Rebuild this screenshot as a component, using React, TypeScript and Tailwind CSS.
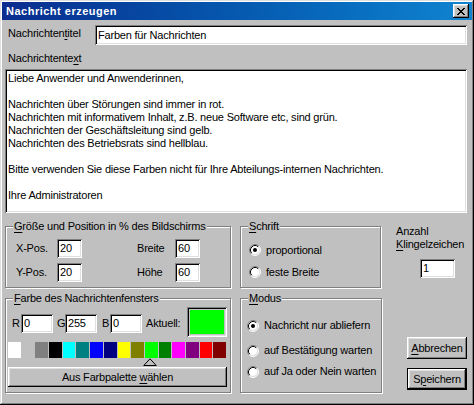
import React from 'react';

const sunken =
  'shadow-[inset_1px_1px_#808080,inset_-1px_-1px_#fff,inset_2px_2px_#000,inset_-2px_-2px_#dfdfdf]';
const raised =
  'shadow-[inset_-1px_-1px_#000,inset_1px_1px_#fff,inset_-2px_-2px_#808080,inset_2px_2px_#dfdfdf]';

const U: React.FC<{ children: React.ReactNode }> = ({ children }) => (
  <span className="underline underline-offset-[2px]">{children}</span>
);

const Field: React.FC<{ value: string; className: string }> = ({ value, className }) => (
  <div className={`bg-white pl-[3px] flex items-center shrink-0 ${sunken} ${className}`}>{value}</div>
);

const Radio: React.FC<{ checked?: boolean }> = ({ checked }) => (
  <svg width="12" height="12" viewBox="0 0 12 12" className="shrink-0">
    <circle cx="6" cy="6" r="5" fill="#fff" />
    <path d="M2.11 9.89A5.5 5.5 0 0 1 9.89 2.11" fill="none" stroke="#808080" />
    <path d="M9.89 2.11A5.5 5.5 0 0 1 2.11 9.89" fill="none" stroke="#fff" />
    <path d="M2.82 9.18A4.5 4.5 0 0 1 9.18 2.82" fill="none" stroke="#000" />
    <path d="M9.18 2.82A4.5 4.5 0 0 1 2.82 9.18" fill="none" stroke="#dfdfdf" />
    {checked && <circle cx="6" cy="6" r="2" fill="#000" />}
  </svg>
);

const Group: React.FC<{ legend: React.ReactNode; className: string; children: React.ReactNode }> = ({
  legend,
  className,
  children,
}) => (
  <div className={`relative shrink-0 border border-[#808080] shadow-[inset_1px_1px_#fff,1px_1px_#fff] ${className}`}>
    <span className="absolute left-[7px] -top-[7px] bg-[#c0c0c0] px-[1px] whitespace-nowrap">{legend}</span>
    {children}
  </div>
);

const Btn: React.FC<{ children: React.ReactNode; className: string }> = ({ children, className }) => (
  <div className={`bg-[#c0c0c0] flex items-center justify-center shrink-0 ${raised} ${className}`}>{children}</div>
);

const swatches = [
  '#ffffff', '#c0c0c0', '#808080', '#000000', '#00ffff', '#008080', '#0000ff', '#000080',
  '#ffff00', '#808000', '#00ff00', '#008000', '#ff00ff', '#800080', '#ff0000', '#800000',
];

const messageText = `Liebe Anwender und Anwenderinnen,

Nachrichten über Störungen sind immer in rot.
Nachrichten mit informativem Inhalt, z.B. neue Software etc, sind grün.
Nachrichten der Geschäftsleitung sind gelb.
Nachrichten des Betriebsrats sind hellblau.

Bitte verwenden Sie diese Farben nicht für Ihre Abteilungs-internen Nachrichten.

Ihre Administratoren`;

export default function App() {
  return (
    <div className="w-[474px] h-[405px] bg-[#c0c0c0] p-[2px] shadow-[inset_-1px_-1px_#000,inset_1px_1px_#dfdfdf,inset_-2px_-2px_#808080,inset_2px_2px_#fff] font-['Liberation_Sans',Arial,sans-serif] text-[11px] leading-[13px] tracking-[-0.2px] text-black">
      {/* title bar */}
      <div className="h-[18px] flex items-center justify-between pl-[4px] pr-[3px] bg-linear-to-r from-[#0a2c8e] to-[#1084d0]">
        <span className="font-bold text-white tracking-[0.5px]">Nachricht erzeugen</span>
        <div className={`w-[16px] h-[14px] bg-[#c0c0c0] flex items-center justify-center ${raised}`}>
          <svg width="8" height="7" viewBox="0 0 8 7" shapeRendering="crispEdges">
            <path
              fill="#000"
              d="M0 0h2v1H0zM6 0h2v1H6zM1 1h2v1H1zM5 1h2v1H5zM2 2h4v1H2zM3 3h2v1H3zM2 4h4v1H2zM1 5h2v1H1zM5 5h2v1H5zM0 6h2v1H0zM6 6h2v1H6z"
            />
          </svg>
        </div>
      </div>

      <div className="pl-[3px]">
        <div className="mt-[5px] flex items-start">
          <div className="w-[90px] pl-[3px] mt-[2px]">
            Nachrichten<U>t</U>itel
          </div>
          <Field value="Farben für Nachrichten" className="w-[372px] h-[20px]" />
        </div>

        <div className="mt-[7px] pl-[3px]">
          Nachrichtente<U>x</U>t
        </div>
        <div className={`mt-[4px] w-[462px] h-[144px] bg-white pt-[3px] pl-[3px] whitespace-pre overflow-hidden ${sunken}`}>
          {messageText}
        </div>

        {/* size / font / rings */}
        <div className="mt-[13px] flex items-start">
          <Group
            legend={
              <>
                <U>G</U>röße und Position in % des Bildschirms
              </>
            }
            className="w-[226px] h-[62px]"
          >
            <div className="pt-[12px] pl-[10px] flex flex-col gap-[5px]">
              <div className="flex items-center h-[19px]">
                <span className="w-[41px]">X-Pos.</span>
                <Field value="20" className="w-[25px] h-[19px]" />
                <span className="ml-[55px] w-[38px]">Breite</span>
                <Field value="60" className="w-[25px] h-[19px]" />
              </div>
              <div className="flex items-center h-[19px]">
                <span className="w-[41px]">Y-Pos.</span>
                <Field value="20" className="w-[25px] h-[19px]" />
                <span className="ml-[55px] w-[38px]">Höhe</span>
                <Field value="60" className="w-[25px] h-[19px]" />
              </div>
            </div>
          </Group>

          <Group
            legend={
              <>
                <U>S</U>chrift
              </>
            }
            className="ml-[9px] w-[141px] h-[62px]"
          >
            <div className="pt-[17px] pl-[8px] flex flex-col gap-[10px]">
              <div className="flex items-center gap-[5px] h-[12px]">
                <Radio checked />
                <span>proportional</span>
              </div>
              <div className="flex items-center gap-[5px] h-[12px]">
                <Radio />
                <span>feste Breite</span>
              </div>
            </div>
          </Group>

          <div className="ml-[15px] -mt-px flex flex-col">
            <span>Anzahl</span>
            <span>
              <U>K</U>lingelzeichen
            </span>
            <Field value="1" className="ml-[24px] mt-[8px] w-[35px] h-[19px]" />
          </div>
        </div>

        {/* colour / mode / buttons */}
        <div className="mt-[10px] flex items-start">
          <Group
            legend={
              <>
                <U>F</U>arbe des Nachrichtenfensters
              </>
            }
            className="w-[226px] h-[95px]"
          >
            <div className="pt-[8px] pl-[6px] flex items-start h-[38px]">
              <div className="mt-[7px] flex items-center h-[19px]">
                <span className="w-[9px]">R</span>
                <Field value="0" className="w-[32px] h-[19px]" />
                <span className="ml-[4px] w-[8px]">G</span>
                <Field value="255" className="w-[32px] h-[19px]" />
                <span className="ml-[5px] w-[8px]">B</span>
                <Field value="0" className="w-[32px] h-[19px]" />
                <span className="ml-[4px] w-[41px]">Aktuell:</span>
              </div>
              <div className={`w-[40px] h-[30px] p-[3px] bg-[#c0c0c0] ${sunken}`}>
                <div className="w-full h-full bg-[#00ff00]" />
              </div>
            </div>
            <div className="mt-[5px] ml-[2px] w-[218px] h-[16px] flex gap-px">
              {swatches.map((c) => (
                <div key={c} className="flex-1 h-full" style={{ backgroundColor: c }} />
              ))}
            </div>
            <div className="ml-[137px] h-[8px]">
              <svg width="14" height="8" viewBox="0 0 14 8">
                <path d="M7 0.8L0.8 7.5H13.2Z" fill="none" stroke="#000" />
              </svg>
            </div>
            <Btn className="mt-[1px] ml-[2px] w-[219px] h-[20px]">
              <span>
                Aus Farbpalette <U>w</U>ählen
              </span>
            </Btn>
          </Group>

          <Group
            legend={
              <>
                <U>M</U>odus
              </>
            }
            className="ml-[9px] w-[142px] h-[95px]"
          >
            <div className="pt-[20px] pl-[6px] flex flex-col">
              <div className="flex items-center gap-[5px] h-[13px]">
                <Radio checked />
                <span>Nachricht nur abliefern</span>
              </div>
              <div className="mt-[12px] flex items-center gap-[5px] h-[13px]">
                <Radio />
                <span>auf Bestätigung warten</span>
              </div>
              <div className="mt-[8px] flex items-center gap-[5px] h-[13px]">
                <Radio />
                <span>auf Ja oder Nein warten</span>
              </div>
            </div>
          </Group>

          <div className="ml-[25px] flex flex-col">
            <Btn className="mt-[39px] w-[60px] h-[22px]">
              <span>
                <U>A</U>bbrechen
              </span>
            </Btn>
            <Btn className="mt-[9px] w-[60px] h-[22px] border border-black">
              <span>
                S<U>p</U>eichern
              </span>
            </Btn>
          </div>
        </div>
      </div>
    </div>
  );
}
